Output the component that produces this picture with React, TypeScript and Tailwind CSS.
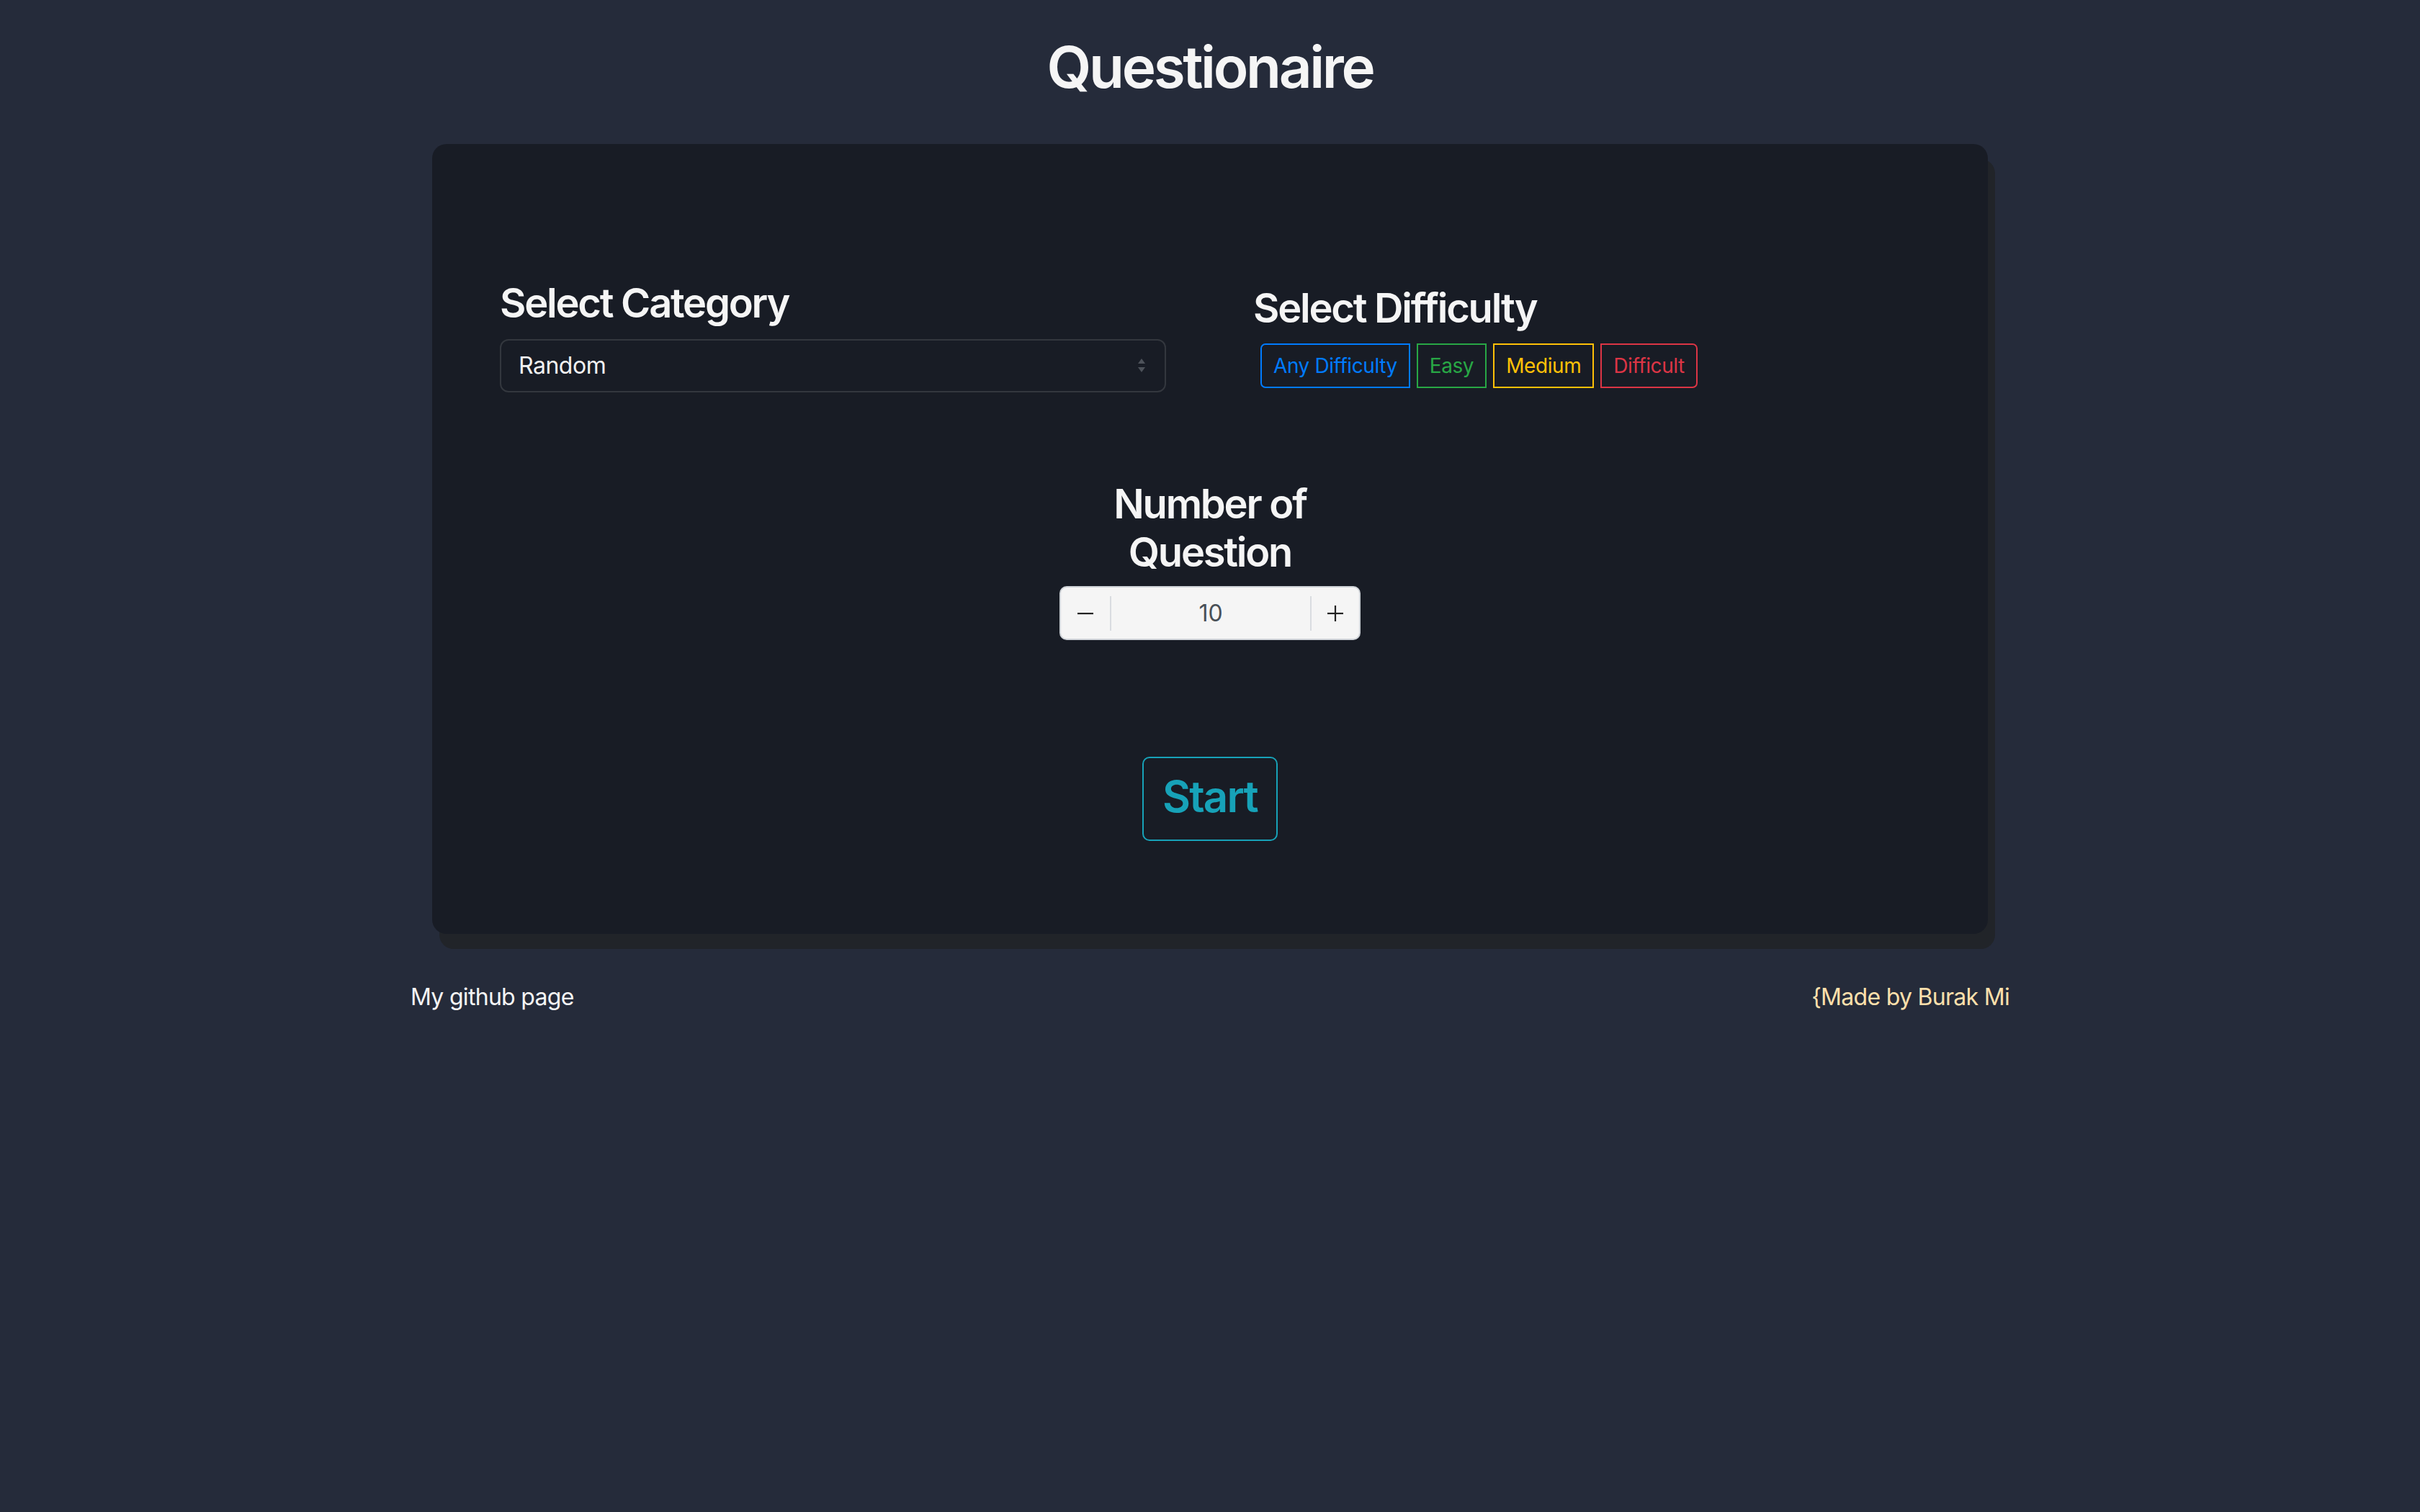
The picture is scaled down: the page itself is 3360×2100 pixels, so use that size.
import React from "react";

export default function App() {
  return (
    <div className="min-h-[2100px] w-full bg-[#252b3a] font-['Inter','Noto_Sans',sans-serif] text-[#f5f5f5]">
      <h1 className="pt-[45px] text-center text-[80px] font-semibold leading-[96px] tracking-[-0.042em] text-[#f5f5f5]">
        Questionaire
      </h1>

      <div className="mx-auto mt-[59px] w-[2160px] rounded-[20px] bg-[#181c25] px-[94px] pt-[188px] pb-[129px] shadow-[10px_21px_0_0_#212429]">
        <div className="flex items-center gap-[121px]">
          <div className="flex w-[925px] flex-col">
            <h3 className="text-[56px] font-semibold leading-[67px] tracking-[-0.04em] text-[#f5f5f5]">Select Category</h3>
            <div className="mt-[16px] flex h-[74px] items-center justify-between rounded-[12px] border-2 border-[#33373e] bg-[#181c25] pl-[24px] pr-[26px]">
              <span className="text-[32px] leading-[48px] tracking-[-0.015em] text-[#f2f2f2]">Random</span>
              <svg width="12" height="22" viewBox="0 0 12 22">
                <polygon points="6,1 11,8 1,8" fill="#4d525a" />
                <polygon points="1,13 11,13 6,20" fill="#4d525a" />
              </svg>
            </div>
          </div>
          <div className="flex w-[925px] flex-col">
            <h3 className="text-[56px] font-semibold leading-[67px] tracking-[-0.04em] text-[#f5f5f5]">Select Difficulty</h3>
            <div className="mt-[15px] ml-[10px] flex gap-[9px]">
              <button className="rounded-l-[7px] border-2 border-[#007bff] px-[16px] py-[8px] text-[28px] leading-[42px] tracking-[-0.015em] text-[#007bff]">
                Any Difficulty
              </button>
              <button className="border-2 border-[#28a745] px-[16px] py-[8px] text-[28px] leading-[42px] tracking-[-0.015em] text-[#28a745]">
                Easy
              </button>
              <button className="border-2 border-[#ffc107] px-[16px] py-[8px] text-[28px] leading-[42px] tracking-[-0.015em] text-[#ffc107]">
                Medium
              </button>
              <button className="rounded-r-[7px] border-2 border-[#dc3545] px-[16px] py-[8px] text-[28px] leading-[42px] tracking-[-0.015em] text-[#dc3545]">
                Difficult
              </button>
            </div>
          </div>
        </div>

        <div className="mt-[122px] flex flex-col items-center">
          <h3 className="w-[418px] text-center text-[56px] font-semibold leading-[67px] tracking-[-0.04em] text-[#f5f5f5]">
            Number of Question
          </h3>
          <div className="mt-[13px] flex h-[75px] w-[418px] items-center rounded-[10px] border-2 border-[#cfd3d8] bg-[#f5f5f5]">
            <div className="flex h-full w-[68px] items-center justify-center">
              <svg width="24" height="4" viewBox="0 0 24 4">
                <rect x="1" y="1" width="22" height="2.2" fill="#222" />
              </svg>
            </div>
            <div className="h-[48px] w-[2px] bg-[#d9dce0]" />
            <div className="flex flex-1 items-center justify-center text-[32px] leading-[48px] text-[#495057]">10</div>
            <div className="h-[48px] w-[2px] bg-[#d9dce0]" />
            <div className="flex h-full w-[66px] items-center justify-center">
              <svg width="24" height="24" viewBox="0 0 24 24">
                <rect x="1" y="10.9" width="22" height="2.2" fill="#222" />
                <rect x="10.9" y="1" width="2.2" height="22" fill="#222" />
              </svg>
            </div>
          </div>
        </div>

        <div className="mt-[162px] flex justify-center">
          <button className="rounded-[10px] border-2 border-[#17a2b8] px-[26px] pt-[17px] pb-[24px] text-[60px] font-semibold leading-[72px] tracking-[-0.03em] text-[#17a2b8]">
            Start
          </button>
        </div>
      </div>

      <div className="mx-auto mt-[64px] flex w-[2220px] justify-between text-[32px] leading-[48px] tracking-[-0.022em]">
        <span className="text-[#f5f5f5]">My github page</span>
        <span className="text-[#ffe0ac]">{"{Made by Burak Mi"}</span>
      </div>
    </div>
  );
}
